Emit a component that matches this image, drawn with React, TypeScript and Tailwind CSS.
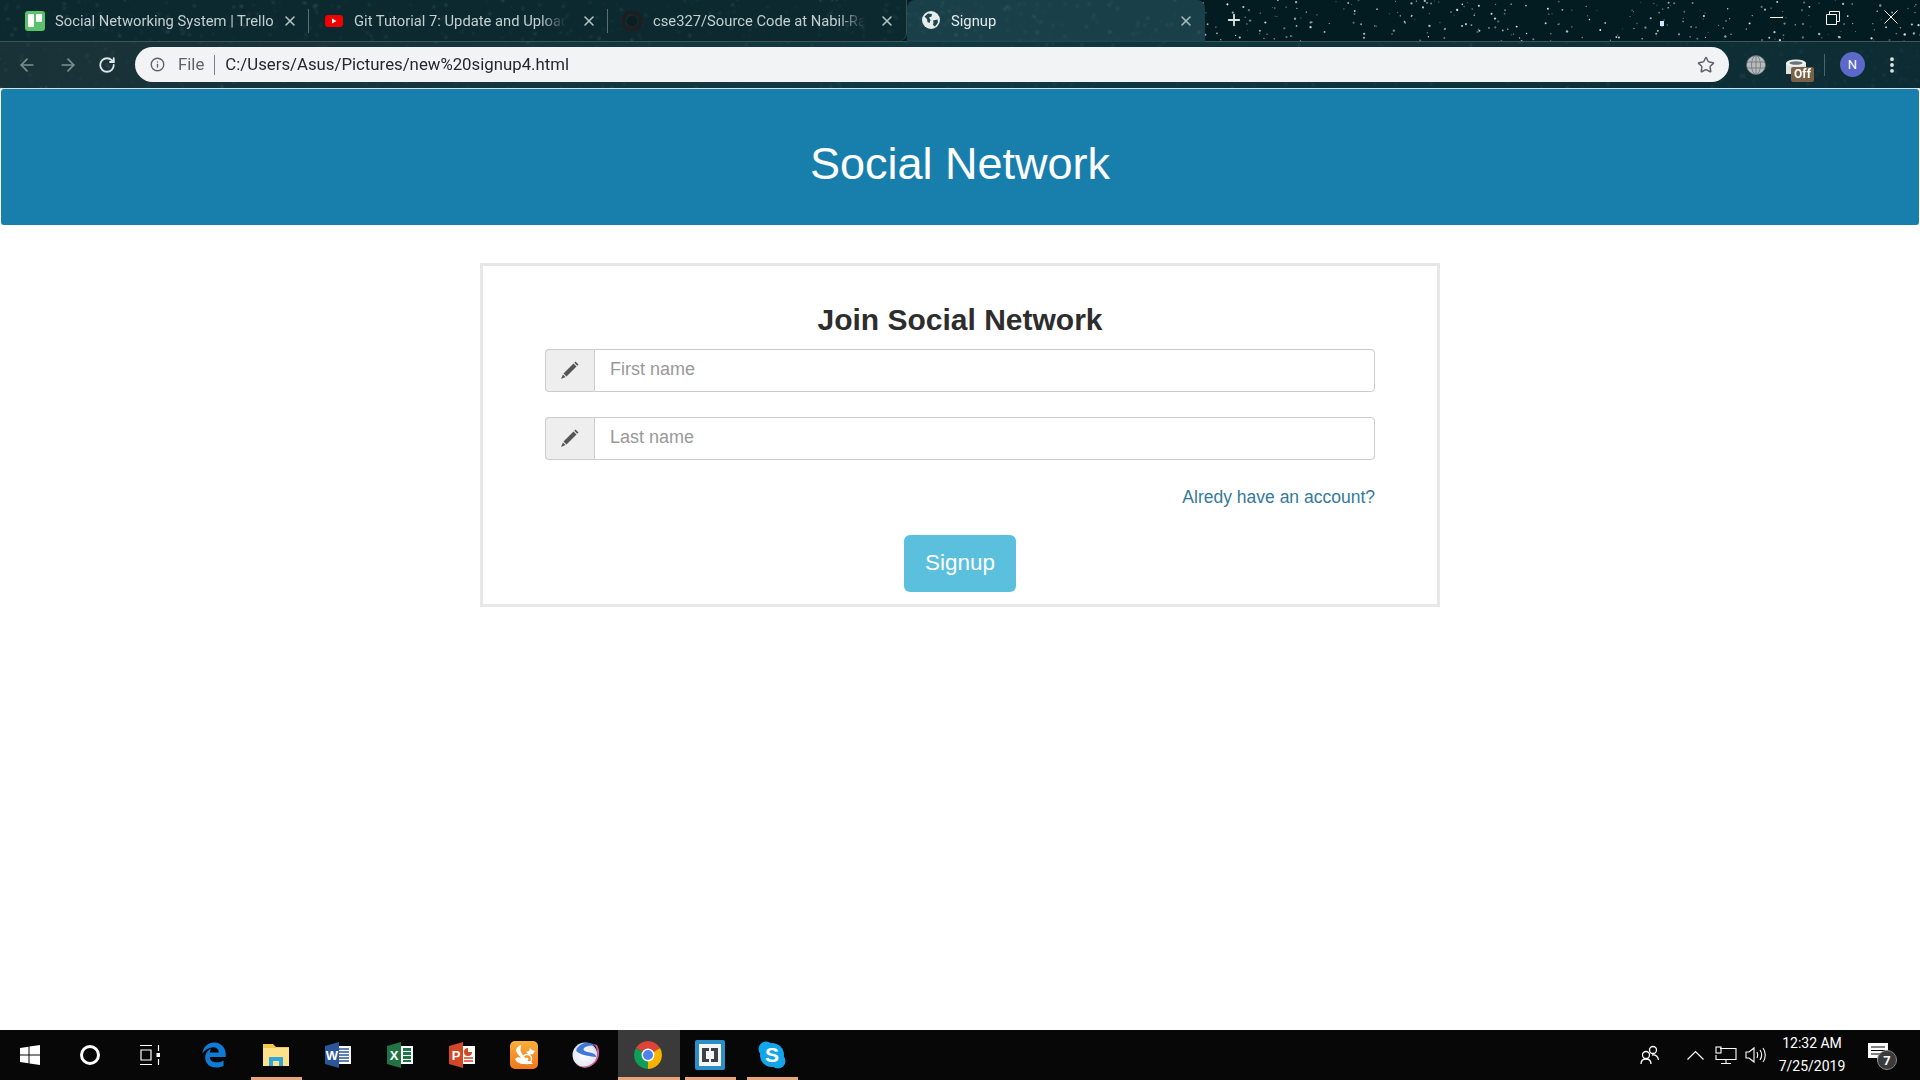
import { FaEdgeLegacy } from "react-icons/fa";
import { ArrowLeft, ArrowRight, RotateCw, Info, Star, Plus, X, MoreVertical } from "lucide-react";

// seeded so the starfield stays the same on every load
function makeStars(count: number) {
  let s = 1337;
  const rnd = () => {
    s = (s * 1664525 + 1013904223) % 4294967296;
    return s / 4294967296;
  };
  const list: { x: number; y: number; r: number; o: number }[] = [];
  for (let i = 0; i < count; i++) {
    list.push({ x: rnd() * 1920, y: rnd() * 88, r: 0.4 + rnd() * 0.8, o: 0.3 + rnd() * 0.7 });
  }
  return list;
}

const stars = makeStars(1500);

function TrelloIcon() {
  return (
    <svg width="20" height="20" viewBox="0 0 20 20" className="shrink-0">
      <rect width="20" height="20" rx="3" fill="#5ac26b" />
      <rect x="3" y="3" width="6" height="13" rx="1" fill="#fff" />
      <rect x="11" y="3" width="6" height="8" rx="1" fill="#fff" />
    </svg>
  );
}

function YoutubeIcon() {
  return (
    <svg width="18" height="20" viewBox="0 0 18 20" className="shrink-0">
      <rect y="4" width="18" height="12" rx="3" fill="#f00000" />
      <path d="M7 7.500v5l4.500-2.500z" fill="#fff" />
    </svg>
  );
}

function GithubIcon() {
  return (
    <svg width="20" height="20" viewBox="0 0 20 20" className="shrink-0">
      <circle cx="10" cy="10" r="9" fill="none" stroke="#241c1c" strokeWidth="3" />
      <circle cx="10" cy="10" r="5" fill="#0d1d20" />
    </svg>
  );
}

function GlobeIcon() {
  return (
    <svg width="18" height="18" viewBox="0 0 18 18" className="shrink-0">
      <circle cx="9" cy="9" r="9" fill="#e6ebeb" />
      <path d="M2.500 5.500 6 2.500l4 .5-.5 2.500-2.500 1 1.500 2.500-1 3-2-1-.5-3zM11 9.500l4.500-1 .5 3-3 4-2-1.500.5-2.500z" fill="#1c4650" />
    </svg>
  );
}

function Tab({ icon, title, active, width, sep, fade }: { icon: React.ReactNode; title: string; active?: boolean; width: number; sep?: boolean; fade?: boolean }) {
  return (
    <div
      className={
        active
          ? "relative z-10 -mb-px flex h-[42px] shrink-0 items-start rounded-t-lg bg-[#1f4a53]/80 pl-[15px] pt-[11px] backdrop-blur-[1px]"
          : "relative flex h-[41px] shrink-0 items-start pt-[11px]"
      }
      style={{ width }}
    >
      {icon}
      <span
        className={
          active
            ? "ml-[11px] w-[220px] truncate text-[14.750px] leading-5 text-[#e4eaea]"
            : fade
              ? "ml-[11px] w-[212px] overflow-hidden whitespace-nowrap text-[14.750px] leading-5 text-[#c3cfd0] [mask-image:linear-gradient(90deg,#000_88%,transparent)]"
              : "ml-[10px] w-[222px] overflow-hidden whitespace-nowrap text-[14.750px] leading-5 text-[#c3cfd0]"
        }
      >
        {title}
      </span>
      <X className={active ? "absolute right-[11px] top-[13px] text-[#a9bbbd]" : "absolute right-[11px] top-[13px] text-[#b5c2c3]"} size={16} strokeWidth={2.4} />
      {sep && <div className="absolute right-0 top-[9px] h-[24px] w-px bg-[#5c7072]" />}
    </div>
  );
}

function MsWord() {
  return (
    <svg width="28" height="28" viewBox="0 0 28 28">
      <rect x="11" y="5" width="16" height="18" fill="#fff" />
      <path d="M15 8h10M15 11h10M15 14h10M15 17h10M15 20h10" stroke="#2b579a" strokeWidth="1.500" />
      <path d="M1 5 15 1v26L1 23z" fill="#2b579a" />
      <text x="8" y="19" fontSize="13" fontWeight="700" fill="#fff" textAnchor="middle" fontFamily="Liberation Sans, sans-serif">W</text>
    </svg>
  );
}

function MsExcel() {
  return (
    <svg width="28" height="28" viewBox="0 0 28 28">
      <rect x="11" y="5" width="16" height="18" fill="#fff" />
      <path d="M17 7h8v3h-8zM17 11h8v3h-8zM17 15h8v3h-8zM17 19h8v2h-8z" fill="#217346" />
      <path d="M1 5 15 1v26L1 23z" fill="#217346" />
      <text x="8" y="19" fontSize="13" fontWeight="700" fill="#fff" textAnchor="middle" fontFamily="Liberation Sans, sans-serif">X</text>
    </svg>
  );
}

function MsPpt() {
  return (
    <svg width="28" height="28" viewBox="0 0 28 28">
      <rect x="11" y="5" width="16" height="18" fill="#fff" />
      <path d="M20 7a4 4 0 1 0 4 4h-4z" fill="#d24726" />
      <path d="M16 17h9M16 20h9" stroke="#d24726" strokeWidth="1.500" />
      <path d="M1 5 15 1v26L1 23z" fill="#d24726" />
      <text x="8" y="19" fontSize="13" fontWeight="700" fill="#fff" textAnchor="middle" fontFamily="Liberation Sans, sans-serif">P</text>
    </svg>
  );
}

function FolderIcon() {
  return (
    <svg width="28" height="24" viewBox="0 0 28 24">
      <path d="M1 1h10l3 3h13v4H1z" fill="#f0c850" />
      <rect x="1" y="5" width="26" height="18" fill="#fde28a" />
      <path d="M7 23v-9h14v9h-4v-5h-6v5z" fill="#2fa6dc" />
    </svg>
  );
}

function UcIcon() {
  return (
    <svg width="28" height="28" viewBox="0 0 28 28">
      <defs>
        <linearGradient id="uc" x1="0" y1="0" x2="0" y2="1">
          <stop offset="0" stopColor="#fbb03b" />
          <stop offset="1" stopColor="#f0761c" />
        </linearGradient>
      </defs>
      <rect width="28" height="28" rx="5" fill="url(#uc)" />
      <path d="M11 4c-4 1-6 5-4 8 1 2 3 3 4 5-2-1-4-1-6 1 1 3 5 5 9 5h9c-1-2-3-3-5-3-2-3-6-6-7-9-1-2 0-5 0-7z" fill="#fff" />
      <circle cx="17" cy="18" r="4.500" fill="none" stroke="#fff" strokeWidth="1.500" />
      <circle cx="17" cy="18" r="1.500" fill="#fff" />
      <path d="M16 11l3-1 1-3 2 2 3 1-2 3-4 1z" fill="#fff" />
    </svg>
  );
}

function SparkIcon() {
  return (
    <svg width="30" height="30" viewBox="0 0 30 30">
      <defs>
        <radialGradient id="sp" cx="0.45" cy="0.5" r="0.6">
          <stop offset="0" stopColor="#ffffff" />
          <stop offset="0.75" stopColor="#e6e8f2" />
          <stop offset="1" stopColor="#b7bdd6" />
        </radialGradient>
      </defs>
      <circle cx="14" cy="15" r="12.500" fill="url(#sp)" />
      <path d="M6 8c5-6 13-7 19-2-5-1-10 0-12 2-2 3 3 4 8 5 3 1 4 2 4 4-6-1-12-1-17-4-3-1-3-3-2-5z" fill="#3f78d6" />
      <path d="M3 23c5 5 15 5 21-2 3-5 3-12-1-17l3 1c3 5 3 12-1 17-6 7-16 7-22 1z" fill="#d6559a" />
    </svg>
  );
}

function ChromeIcon() {
  return (
    <svg width="28" height="28" viewBox="0 0 28 28">
      <path d="M14 14 1.900 7A14 14 0 0 1 26.100 7z" fill="#db4437" />
      <path d="M14 14 26.100 7A14 14 0 0 1 14 28z" fill="#f4b400" />
      <path d="M14 14 14 28A14 14 0 0 1 1.900 7z" fill="#0f9d58" />
      <circle cx="14" cy="14" r="6.500" fill="#fff" />
      <circle cx="14" cy="14" r="5" fill="#4d83ea" />
    </svg>
  );
}

function BracketsIcon() {
  return (
    <svg width="30" height="30" viewBox="0 0 30 30">
      <rect width="30" height="30" rx="2" fill="#2a8fc9" />
      <rect x="4" y="4" width="22" height="22" fill="#f4f6f7" />
      <path d="M14 8H7v14h7v-3h-3V11h3zM16 8h7v14h-7v-3h3V11h-3z" fill="#3d4145" />
    </svg>
  );
}

function SkypeIcon() {
  return (
    <svg width="28" height="28" viewBox="0 0 28 28">
      <circle cx="8" cy="8" r="7.500" fill="#12a5ea" />
      <circle cx="20" cy="20" r="7.500" fill="#12a5ea" />
      <circle cx="14" cy="14" r="12" fill="#12a5ea" />
      <text x="14" y="21" fontSize="21" fontWeight="700" fill="#fff" textAnchor="middle" fontFamily="Liberation Sans, sans-serif">S</text>
    </svg>
  );
}

function Pencil() {
  return (
    <svg width="20" height="20" viewBox="0 0 20 20" className="-mt-px">
      <path d="M15.500 1.500 18.500 4.500 17.300 5.700 14.300 2.700z" fill="#555" />
      <path d="M13.500 3.500 16.500 6.500 6.500 16.500 3.500 13.500z" fill="#555" />
      <path d="M3 14.500 5.500 17 1 19z" fill="#555" />
    </svg>
  );
}

function NameField({ placeholder }: { placeholder: string }) {
  return (
    <div className="flex h-[43px] w-[830px]">
      <div className="flex w-[49px] shrink-0 items-center justify-center rounded-l border border-r-0 border-[#ccc] bg-[#eee]">
        <Pencil />
      </div>
      <input
        readOnly
        placeholder={placeholder}
        className="h-full flex-1 rounded-r border border-[#ccc] bg-white pb-[2px] pl-[15px] pr-[16px] text-[18px] outline-none placeholder:text-[#999]"
      />
    </div>
  );
}

function Slot({ children, on, full }: { children: React.ReactNode; on?: boolean; full?: boolean }) {
  return (
    <div className={full ? "relative flex h-[50px] w-[62px] shrink-0 items-center justify-center bg-[#3a3a3a] pr-[3px]" : "relative flex h-[50px] w-[62px] shrink-0 items-center justify-center pr-[3px]"}>
      {children}
      {on && <div className={full ? "absolute bottom-0 left-0 h-[3px] w-full bg-[#e8a678]" : "absolute bottom-0 left-[5px] h-[3px] w-[51px] bg-[#e8a678]"} />}
    </div>
  );
}

export default function App() {
  return (
    <div className="flex h-screen w-full flex-col overflow-hidden bg-white font-['Liberation_Sans',Arial,sans-serif]">
      {/* browser chrome */}
      <div className="relative h-[89px] shrink-0 overflow-hidden bg-[#031c22] font-['Roboto',sans-serif]">
        <svg className="absolute inset-0" width="1920" height="89">
          {stars.map((d, i) => (
            <circle key={i} cx={d.x} cy={d.y} r={d.r} fill="#dff5f5" opacity={d.o} />
          ))}
          <rect x="1660" y="21" width="4" height="5" fill="#cfe9ff" />
        </svg>

        <div className="relative flex h-[41px]">
          <div className="flex rounded-br-lg border-r border-[#34504f] bg-[#0f2e34]/75 backdrop-blur-[1px]">
            <Tab icon={<div className="ml-[25px]"><TrelloIcon /></div>} title="Social Networking System | Trello" width={309} sep />
            <Tab icon={<div className="ml-[16px]"><YoutubeIcon /></div>} title="Git Tutorial 7: Update and Upload" width={299} sep fade />
            <Tab icon={<div className="ml-[14px]"><GithubIcon /></div>} title="cse327/Source Code at Nabil-Rafi" width={298} fade />
          </div>
          <Tab icon={<GlobeIcon />} title="Signup" active width={298} />
          <Plus className="ml-[20px] mt-[11px] text-[#dbe5e5]" size={18} strokeWidth={2.4} />
          <div className="ml-auto flex text-white">
            <div className="flex h-[34px] w-[58px] items-center justify-center pl-[2px]">
              <div className="h-px w-[13px] bg-white" />
            </div>
            <div className="flex h-[34px] w-[58px] items-center justify-center pt-[2px]">
              <svg width="14" height="14" viewBox="0 0 14 14" fill="none" stroke="#fff">
                <path d="M.5 3.500h10v10H.5zM3.500 3.500v-3h10v10h-3" />
              </svg>
            </div>
            <div className="flex h-[34px] w-[58px] items-center justify-center">
              <svg width="14" height="14" viewBox="0 0 14 14" fill="none" stroke="#fff">
                <path d="M.5.5l13 13M13.500.5l-13 13" />
              </svg>
            </div>
          </div>
        </div>

        <div className="relative flex h-[47px] items-start border-t border-[#3f5558] bg-[linear-gradient(90deg,rgba(30,54,58,.85),rgba(18,62,72,.85)_50%,rgba(16,46,54,.85))] pt-[5px] backdrop-blur-[1px]">
          <div className="flex h-[35px] w-[135px] items-center text-[#7d8f91]">
            <ArrowLeft className="ml-[17px]" size={20} strokeWidth={2} />
            <ArrowRight className="ml-[21px]" size={20} strokeWidth={2} />
            <RotateCw className="ml-[20px] text-[#dfe8e8]" size={18} strokeWidth={2.4} />
          </div>
          <div className="flex h-[35px] w-[1594px] items-center rounded-full bg-[#f1f3f4] text-[16.800px]">
            <Info className="ml-[15px] text-[#5f6368]" size={15} strokeWidth={2.2} />
            <span className="ml-[13px] text-[#5f6368]">File</span>
            <div className="ml-[10px] h-[20px] w-px bg-[#7d8084]" />
            <span className="ml-[10px] flex-1 text-[#24282c]">C:/Users/Asus/Pictures/new%20signup4.html</span>
            <Star className="mr-[14px] text-[#5f6368]" size={18} strokeWidth={2} />
          </div>
          <div className="flex h-[35px] flex-1 items-center">
            <svg className="ml-[17px]" width="20" height="20" viewBox="0 0 20 20" fill="#b9bcbc" stroke="#5f6b6d" strokeWidth=".7">
              <ellipse cx="10" cy="10" rx="9.500" ry="9.500" />
              <ellipse cx="10" cy="10" rx="4.500" ry="9.500" fill="none" />
              <path d="M10 .5v19M1 7h18M1 13h18" fill="none" />
            </svg>
            <div className="relative ml-[20px] h-[24px] w-[24px]">
              <svg className="mt-[6px]" width="20" height="15" viewBox="0 0 20 15">
                <path d="M0 4v11h20V4z" fill="#dfe2e2" />
                <ellipse cx="10" cy="4" rx="10" ry="3.500" fill="#f0f2f2" />
                <ellipse cx="10" cy="4" rx="6.500" ry="1.800" fill="#697476" />
              </svg>
              <span className="absolute left-[5px] top-[14px] flex h-[15px] w-[23px] items-center justify-center rounded-[2px] bg-[#7a6246] text-[12px] font-bold leading-none text-white">Off</span>
            </div>
            <div className="ml-[14px] h-[22px] w-px bg-[#4d6366]" />
            <div className="ml-[15px] flex h-[25px] w-[25px] items-center justify-center rounded-full bg-[#5b69c9] text-[13px] text-white">N</div>
            <MoreVertical className="ml-[17px] text-[#dfe8e8]" size={20} strokeWidth={2.600} />
          </div>
        </div>
        <div className="relative h-px bg-[#d3e2e8]" />
      </div>

      {/* page */}
      <div className="flex-1 overflow-hidden">
        <header className="mx-px flex h-[136px] items-start justify-center rounded-[3px] bg-[#187fad] pt-[47px]">
          <h1 className="text-[45px] leading-[56px] text-white">Social Network</h1>
        </header>
        <div className="mx-auto mt-[38px] h-[344px] w-[960px] border-[3px] border-[#e7e7e7] px-[62px] pt-[37px]">
          <h2 className="mb-[12px] text-center text-[30px] font-bold leading-[34px] text-[#2d2d2d]">Join Social Network</h2>
          <div className="flex flex-col gap-[25px]">
            <NameField placeholder="First name" />
            <NameField placeholder="Last name" />
          </div>
          <div className="mt-[24px] text-right text-[17.500px] leading-[26px] text-[#337a9b]">Alredy have an account?</div>
          <div className="mt-[25px] flex justify-center">
            <button className="h-[57px] w-[112px] rounded-md bg-[#5bc0de] pb-[2px] text-[22.500px] text-white">Signup</button>
          </div>
        </div>
      </div>

      {/* taskbar */}
      <div className="flex h-[50px] shrink-0 items-center bg-[#070707] font-['Roboto',sans-serif]">
        <div className="flex h-[50px] w-[60px] items-center justify-center">
          <svg width="20" height="20" viewBox="0 0 20 20" fill="#fff">
            <path d="M0 3 8.500 1.800V9.500H0zM9.500 1.600 20 0v9.500H9.500zM0 10.500h8.500v7.700L0 17zM9.500 10.500H20V20L9.500 18.400z" />
          </svg>
        </div>
        <div className="flex h-[50px] w-[60px] items-center justify-center">
          <div className="h-[20px] w-[20px] rounded-full border-[3px] border-white" />
        </div>
        <div className="flex h-[50px] w-[60px] items-center justify-center">
          <svg width="20" height="20" viewBox="0 0 20 20" fill="none" stroke="#fff" strokeWidth="1.200">
            <path d="M0 .5h12M0 19.500h12M1 5h10v10H1zM18.500 0v6M18.500 14v6" />
            <rect x="16.500" y="8" width="4" height="4" fill="#fff" stroke="none" />
          </svg>
        </div>
        <div className="flex pl-[4px]">
          <Slot><FaEdgeLegacy className="text-[#0f7bd4]" size={26} /></Slot>
          <Slot on><FolderIcon /></Slot>
          <Slot><MsWord /></Slot>
          <Slot><MsExcel /></Slot>
          <Slot><MsPpt /></Slot>
          <Slot><UcIcon /></Slot>
          <Slot><SparkIcon /></Slot>
          <Slot on full><ChromeIcon /></Slot>
          <Slot on><BracketsIcon /></Slot>
          <Slot on><SkypeIcon /></Slot>
        </div>

        <div className="ml-auto flex h-[50px] items-center text-white">
          <svg width="20" height="20" viewBox="0 0 20 20" fill="none" stroke="#fff" strokeWidth="1.300">
            <circle cx="6" cy="10" r="3.500" />
            <path d="M1 19c0-3 2-5 5-5s5 2 5 5" />
            <circle cx="13" cy="5" r="3.500" />
            <path d="M12 10c4-.5 6 2 6.500 5" />
          </svg>
          <svg className="ml-[27px]" width="17" height="10" viewBox="0 0 17 10" fill="none" stroke="#fff" strokeWidth="1.200">
            <path d="M.5 9.500 8.500 1.500l8 8" />
          </svg>
          <svg className="ml-[11px]" width="22" height="20" viewBox="0 0 22 20" fill="none" stroke="#fff" strokeWidth="1.100">
            <path d="M5 3.500h16v11H1V10M11 14.500V18M6 18.500h10" />
            <rect x="1" y="2" width="5" height="6" />
          </svg>
          <svg className="ml-[8px]" width="22" height="20" viewBox="0 0 22 20" fill="none" stroke="#fff" strokeWidth="1.100">
            <path d="M1 7v6h3l5 4V3L4 7zM12 7c1 2 1 4 0 6M15 5c2 3 2 7 0 10M18 3c3 4 3 10 0 14" />
          </svg>
          <div className="ml-[8px] flex w-[74px] flex-col items-center text-[14px] leading-[23px]">
            <span>12:32 AM</span>
            <span>7/25/2019</span>
          </div>
          <div className="relative ml-[19px] mr-[30px] h-[24px] w-[22px]">
            <svg width="22" height="20" viewBox="0 0 22 20" fill="#fff">
              <path d="M0 0h20v15h-7l-4 4v-4H0z" />
              <path d="M3 4h14M3 7.500h14M3 11h14" stroke="#070707" strokeWidth="1" />
            </svg>
            <span className="absolute left-[9px] top-[7px] flex h-[20px] w-[20px] items-center justify-center rounded-full border border-[#888] bg-[#3a3a3a] text-[13px] font-bold leading-none text-white">7</span>
          </div>
        </div>
      </div>
    </div>
  );
}
